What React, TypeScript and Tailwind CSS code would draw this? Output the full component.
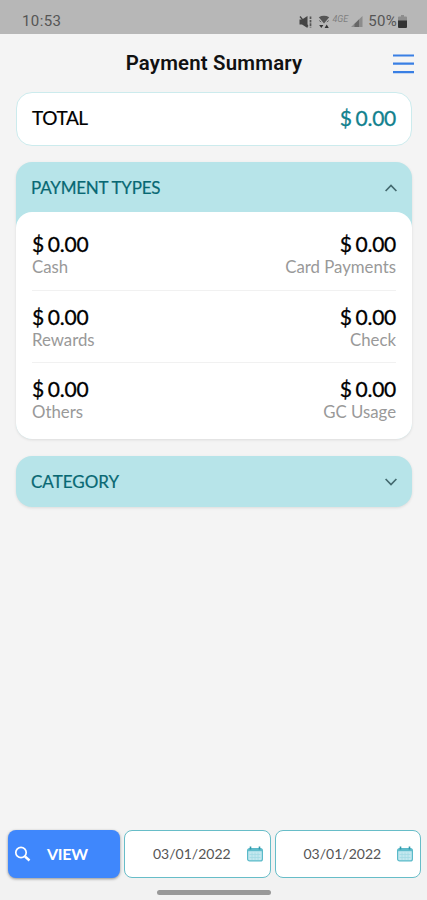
import { useState } from "react";

const payments = [
  [
    { label: "Cash", amount: "0.00" },
    { label: "Card Payments", amount: "0.00" },
  ],
  [
    { label: "Rewards", amount: "0.00" },
    { label: "Check", amount: "0.00" },
  ],
  [
    { label: "Others", amount: "0.00" },
    { label: "GC Usage", amount: "0.00" },
  ],
];

function StatusBar() {
  return (
    <div className="flex h-[34px] shrink-0 items-center justify-between bg-[#b7b7b7] pl-[22px] pr-[20px] pt-[9px] font-['Roboto',sans-serif] text-[#555]">
      <span className="text-[15px] leading-none tracking-[0.4px]">10:53</span>
      <div className="flex items-center">
        <svg width="14" height="14" viewBox="0 0 14 14" fill="none">
          <path d="M.5 4.500H3L8.500 1v12L3 9.500H.5z" fill="#444" />
          <path d="M1 1.500l8 10" stroke="#444" strokeWidth="1.3" />
          <path d="M11.500 1.500v11" stroke="#555" strokeWidth="1.700" strokeDasharray="2.6 .8" />
        </svg>
        <svg className="ml-[5px]" width="12" height="14" viewBox="0 0 12 14">
          <path d="M.8 2.200Q6-.6 11.200 2.200L6 8.500z" fill="#555" />
          <path d="M1.2 5.500l2 1.500M10.800 5.500l-2 1.500" stroke="#666" />
          <path d="M1.2 10h4.200L3.300 13zM6.600 13h4.200L8.700 9.500z" fill="#333" />
        </svg>
        <span className="ml-[2px] -mt-[5px] text-[9px] italic leading-none text-[#808080]">4GE</span>
        <svg className="ml-[3px]" width="12" height="13" viewBox="0 0 12 13">
          <path d="M0 12L11.500 1v11z" fill="#8c8c8c" />
          <path d="M3.500 12V9L8 4.500V12z" fill="#666" />
        </svg>
        <span className="ml-[5px] text-[15px] leading-none tracking-[0.3px]">50%</span>
        <svg className="ml-[1px]" width="9" height="13" viewBox="0 0 9 13">
          <path d="M3 0h3v1.500h2a1 1 0 011 1V6H0V2.500a1 1 0 011-1h2z" fill="#8d8d8d" />
          <path d="M0 5.500h9V12a1 1 0 01-1 1H1a1 1 0 01-1-1z" fill="#333" />
        </svg>
      </div>
    </div>
  );
}

function Amount({ value }: { value: string }) {
  return (
    <span className="block text-[21px] leading-[24px] tracking-[-0.25px] [-webkit-text-stroke:0.3px_currentColor] [word-spacing:-1.2px]">
      $ {value}
    </span>
  );
}

function Chevron({ up }: { up?: boolean }) {
  return (
    <svg width="12" height="8" viewBox="0 0 12 8" fill="none" stroke="#44696f" strokeWidth="1.7">
      <path d={up ? "M.6 7L6 1.500 11.400 7" : "M.6 1L6 6.500 11.400 1"} />
    </svg>
  );
}

function CalendarIcon() {
  return (
    <svg width="16" height="16" viewBox="0 0 16 16" fill="none">
      <rect x=".6" y="2.600" width="14.800" height="12.300" rx="2" fill="#c3e8ef" stroke="#5bbac9" strokeWidth="1.200" />
      <path d="M1 3h14v2.200H1z" fill="#5fbccb" />
      <path d="M3.500 .5v3M12.500 .5v3" stroke="#3499ac" strokeWidth="1.600" />
      <path d="M2.500 8.500h11M2.500 11.500h11M5 6.500v7.500M8 6.500v7.500M11 6.500v7.500" stroke="#a3dbe5" strokeWidth=".8" />
    </svg>
  );
}

function DateField({ value }: { value: string }) {
  return (
    <button className="flex h-12 flex-1 items-center justify-between rounded-lg border border-[#67bdc8] bg-white pl-[28px] pr-[7px] text-[14px] text-[#555]">
      <span className="pb-px">{value}</span>
      <CalendarIcon />
    </button>
  );
}

export default function App() {
  const [showTypes, setShowTypes] = useState(true);

  return (
    <div className="flex h-[900px] w-full flex-col overflow-hidden bg-[#f4f4f4] font-['Lato',sans-serif] text-black">
      <StatusBar />
      <header className="grid h-[58px] shrink-0 grid-cols-[1fr_auto_1fr] items-center pl-[14px] pr-[13px] pt-px">
        <h1 className="col-start-2 font-['Roboto',sans-serif] text-[20.4px] font-semibold leading-none tracking-[0.2px] text-[#111]">
          Payment Summary
        </h1>
        <button aria-label="Menu" className="justify-self-end">
          <svg width="21" height="20" viewBox="0 0 21 20" stroke="#397fe4" strokeWidth="2.200">
            <path d="M0 1.500h21M0 9.700h21M0 18.200h21" />
          </svg>
        </button>
      </header>

      <main className="flex flex-1 flex-col pl-4 pr-[15px]">
        <section className="flex h-[54px] items-center justify-between rounded-2xl border-[1.5px] border-[#ccebed] bg-white pl-[15px] pr-[15px] pb-[2px]">
          <span className="text-[19px] tracking-[-0.4px] [-webkit-text-stroke:0.2px_currentColor]">TOTAL</span>
          <div className="text-[#12818e]">
            <Amount value="0.00" />
          </div>
        </section>

        <section className="mt-4 rounded-2xl bg-[#b7e4e9] shadow-[0_1px_3px_rgba(0,0,0,0.1)]">
          <button
            className="flex h-[50px] w-full items-center justify-between px-[15px] pt-px text-[17px] text-[#086873]"
            onClick={() => setShowTypes(!showTypes)}
          >
            <span className="tracking-[-0.22px] [-webkit-text-stroke:0.2px_currentColor]">PAYMENT TYPES</span>
            <Chevron up={showTypes} />
          </button>
          {showTypes && (
            <div className="h-[227px] divide-y divide-[#f1f1f1] rounded-2xl bg-white px-4 pt-[6px]">
              {payments.map((row) => (
                <div key={row[0].label} className="flex h-[72.5px] justify-between pt-[14px]">
                  {row.map((item) => (
                    <div key={item.label} className="last:text-right">
                      <Amount value={item.amount} />
                      <span className="block text-[16.8px] leading-[22px] text-[#999]">{item.label}</span>
                    </div>
                  ))}
                </div>
              ))}
            </div>
          )}
        </section>

        <section className="mt-[17px] rounded-2xl bg-[#b7e4e9] shadow-[0_1px_3px_rgba(0,0,0,0.1)]">
          <button className="flex h-[51px] w-full items-center justify-between px-[15px] pt-px text-[17px] text-[#086873]">
            <span className="[-webkit-text-stroke:0.2px_currentColor]">CATEGORY</span>
            <Chevron />
          </button>
        </section>
      </main>

      <footer className="h-[70px] shrink-0 bg-[#f2f2f2]">
        <div className="flex gap-1 pl-2 pr-[6px]">
          <button className="flex h-12 w-[112px] items-center rounded-lg bg-[#3f87fc] pl-[6px] text-white shadow-[0_1px_3px_rgba(0,0,0,0.4)]">
            <svg width="17" height="16" viewBox="0 0 17 16" fill="none" stroke="currentColor">
              <circle cx="7" cy="6.500" r="5.200" strokeWidth="1.700" />
              <path d="M11 10.500l4.500 4" strokeWidth="2.500" />
            </svg>
            <span className="ml-4 text-[16px] font-bold tracking-[-0.3px]">VIEW</span>
          </button>
          <DateField value="03/01/2022" />
          <DateField value="03/01/2022" />
        </div>
        <div className="mx-auto mt-3 h-[5px] w-[114px] rounded-full bg-[#999]" />
      </footer>
    </div>
  );
}
